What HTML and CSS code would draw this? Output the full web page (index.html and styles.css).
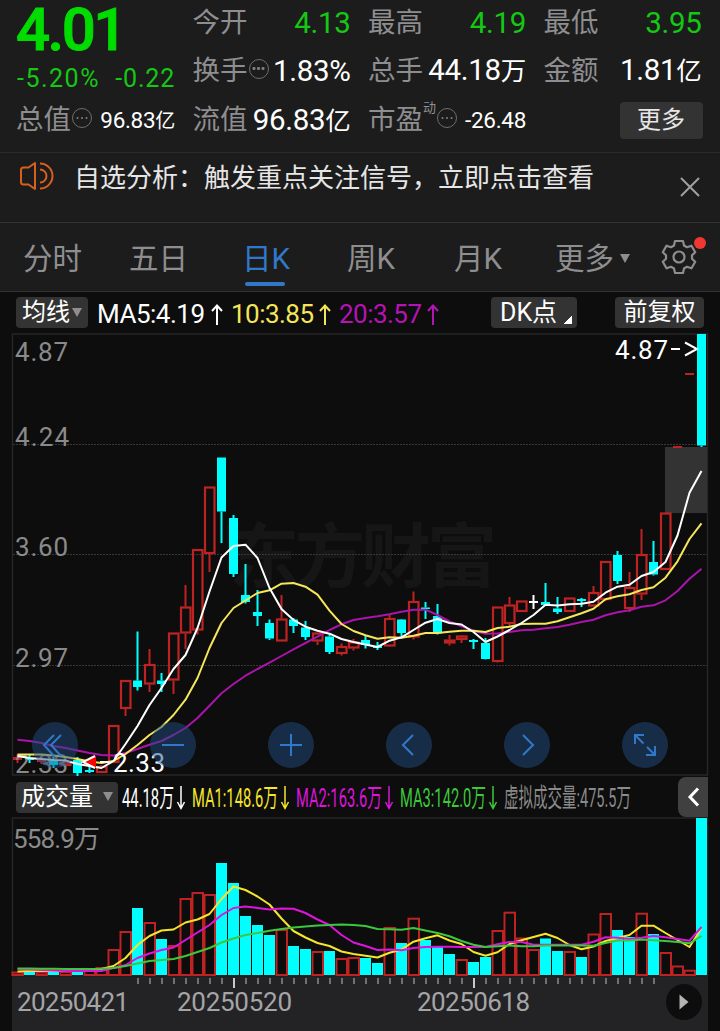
FILE: index.html
```
<!DOCTYPE html>
<html lang="zh-CN">
<head>
    <meta charset="UTF-8">
    <meta name="viewport" content="width=device-width, initial-scale=1.0">
    <title>日K</title>
    <link rel="stylesheet" href="styles.css">
</head>
<body>
    <section class="quote">
        <div class="price-box">
            <div class="price">4.01</div>
            <div class="change"><span class="percent">-5.20%</span><span>-0.22</span></div>
        </div>
        <div class="item"><label>今开</label><b class="green">4.13</b></div>
        <div class="item"><label>最高</label><b class="green">4.19</b></div>
        <div class="item"><label>最低</label><b class="green">3.95</b></div>
        <div class="item"><label>换手</label><i class="dots"></i><b>1.83%</b></div>
        <div class="item"><label>总手</label><b>44.18<em>万</em></b></div>
        <div class="item"><label>金额</label><b>1.81<em>亿</em></b></div>
        <div class="item"><label>总值</label><i class="dots"></i><b class="small">96.83<em>亿</em></b></div>
        <div class="item"><label>流值</label><b>96.83<em>亿</em></b></div>
        <div class="item"><label>市盈</label><sup>动</sup><i class="dots"></i><b class="small">-26.48</b></div>
        <div class="item"><button class="more">更多</button></div>
    </section>

    <section class="notice">
        <svg class="horn" width="36" height="30" viewBox="0 0 36 30" fill="none" stroke="#d95f1e" stroke-width="2">
            <path d="M17 2 L10.500 6.500 H5.500 Q3 6.500 3 9 V21 Q3 23.500 5.500 23.500 H10.500 L17 28 Z" stroke-linejoin="round"/>
            <path d="M22 8.500 A6.500 6.500 0 0 1 22 21.500"/>
            <path d="M22 2.500 A12.500 12.500 0 0 1 22 27.500"/>
        </svg>
        <span class="notice-text">自选分析：触发重点关注信号，立即点击查看</span>
        <svg class="close" width="20" height="20" viewBox="0 0 20 20" stroke="#a0a0a0" stroke-width="2"><path d="M1 1 L19 19 M19 1 L1 19"/></svg>
    </section>

    <nav class="tabs">
        <span>分时</span>
        <span>五日</span>
        <span class="active">日K</span>
        <span>周K</span>
        <span>月K</span>
        <span>更多<i class="arrow"></i></span>
        <span class="gear">
            <svg width="36" height="36" viewBox="-18 -18 36 36" fill="none" stroke="#8e8e90" stroke-width="2.200" stroke-linejoin="round">
                <path d="M-4 -16 H4 L5 -11.500 L8 -9.800 L12.500 -11.300 L16.200 -4.800 L13 -1.700 V1.700 L16.200 4.800 L12.500 11.300 L8 9.800 L5 11.500 L4 16 H-4 L-5 11.500 L-8 9.800 L-12.500 11.300 L-16.200 4.800 L-13 1.700 V-1.700 L-16.200 -4.800 L-12.500 -11.300 L-8 -9.800 L-5 -11.500 Z"/>
                <circle r="5.500"/>
            </svg>
            <i class="red-dot"></i>
        </span>
    </nav>

    <section class="legend">
        <button class="btn ma-btn">均线<i class="arrow"></i></button>
        <svg class="legend-text" width="360" height="40" viewBox="88 292 360 40">
            <text x="97" y="322" textLength="108" fill="#fff">MA5:4.19</text>
            <text x="231" y="322" textLength="83" fill="#f5e55a">10:3.85</text>
            <text x="339" y="322" textLength="83" fill="#b414b4">20:3.57</text>
            <g fill="none" stroke-width="2">
                <path d="M217 324 V305 M212 310 L217 304.500 L222 310" stroke="#fff"/>
                <path d="M325 324 V305 M320 310 L325 304.500 L330 310" stroke="#f5e55a"/>
                <path d="M433 324 V305 M428 310 L433 304.500 L438 310" stroke="#b414b4"/>
            </g>
        </svg>
        <button class="btn dk-btn">DK点<i class="corner"></i></button>
        <button class="btn fq-btn">前复权</button>
    </section>

    <section class="chart">
        <svg id="kline" width="720" height="444" viewBox="0 333 720 444">
            <text class="watermark" x="229" y="582" textLength="268">东方财富</text>
            <path class="frame" d="M12.500 334 H707.500 V775 H12.500 Z"/>
            <path class="grid" d="M13 444.500 H707 M13 554.500 H707 M13 665.500 H707"/>
            <rect x="665" y="447" width="42" height="66" fill="#333"/>
        </svg>
        <div class="controls">
            <button><svg viewBox="0 0 46 46"><path d="M22 13 L12 23 L22 34 M29 13 L19 23 L29 34"/></svg></button>
            <button><svg viewBox="0 0 46 46"><path d="M12 23 H34"/></svg></button>
            <button><svg viewBox="0 0 46 46"><path d="M12 23 H34 M23 12 V34"/></svg></button>
            <button><svg viewBox="0 0 46 46"><path d="M27 13 L17 23 L27 33"/></svg></button>
            <button><svg viewBox="0 0 46 46"><path d="M19 13 L29 23 L19 33"/></svg></button>
            <button><svg viewBox="0 0 46 46"><path d="M13 22 V13 H22 M13 13 L21.500 21.500 M33 24 V33 H24 M33 33 L25 25"/></svg></button>
        </div>
    </section>

    <section class="legend vol-legend">
        <button class="btn vol-btn">成交量<i class="arrow"></i></button>
        <svg class="vol-text" width="520" height="40" viewBox="118 777 520 40">
            <g>
                <text x="122" y="807" textLength="52" lengthAdjust="spacingAndGlyphs" fill="#fff">44.18万</text>
                <text x="192" y="807" textLength="86" lengthAdjust="spacingAndGlyphs" fill="#f5e62c">MA1:148.6万</text>
                <text x="296" y="807" textLength="86" lengthAdjust="spacingAndGlyphs" fill="#dc14dc">MA2:163.6万</text>
                <text x="400" y="807" textLength="86" lengthAdjust="spacingAndGlyphs" fill="#3cc83c">MA3:142.0万</text>
                <text x="504" y="807" textLength="127" lengthAdjust="spacingAndGlyphs" fill="#8a8a8a">虚拟成交量:475.5万</text>
            </g>
            <g fill="none" stroke-width="1.500">
                <path d="M181 786 V808 M177.500 802 L181 808.500 L184.500 802" stroke="#fff"/>
                <path d="M285 786 V808 M281.500 802 L285 808.500 L288.500 802" stroke="#f5e62c"/>
                <path d="M389 786 V808 M385.500 802 L389 808.500 L392.500 802" stroke="#dc14dc"/>
                <path d="M493 786 V808 M489.500 802 L493 808.500 L496.500 802" stroke="#3cc83c"/>
            </g>
        </svg>
        <button class="fold"><svg width="30" height="40" viewBox="0 0 30 40"><path d="M20 11.500 L12 20 L20 28.500"/></svg></button>
    </section>

    <section class="chart">
        <svg id="volume" width="720" height="160" viewBox="0 817 720 160">
            <path class="frame" d="M12.500 818 H707.500 V976 H12.500 Z"/>
        </svg>
    </section>

    <footer class="axis">
        <svg id="dates" width="696" height="54" viewBox="12 977 696 54">
            <text x="17" y="1011" textLength="112">20250421</text>
            <text x="177" y="1011" textLength="115">20250520</text>
            <text x="417" y="1011" textLength="113">20250618</text>
            <circle cx="684" cy="1002" r="18" fill="#0d0d0d"/>
            <path d="M679.500 994.500 L688.500 1002 L679.500 1009.500 Z" fill="#b4b4b4"/>
        </svg>
    </footer>

    <script src="chart.js"></script>
</body>
</html>
```
FILE: styles.css
```
* {
    box-sizing: border-box;
}
body {
    margin: 0;
    width: 720px;
    height: 1031px;
    overflow: hidden;
    background: #0d0d0d;
    color: #fff;
    font-family: Roboto, "Noto Sans CJK SC", sans-serif;
}
button {
    border: none;
    padding: 0;
    color: #fff;
    font-family: inherit;
}
svg {
    display: block;
}
svg text {
    font-family: Roboto, "Noto Sans CJK SC", sans-serif;
}
i, em {
    font-style: normal;
}

/* quote header */
.quote {
    display: grid;
    grid-template-columns: 159px 158px 158px 158px;
    grid-template-rows: 45px 51px 48px;
    column-gap: 17.500px;
    height: 153px;
    padding: 0 16px;
    background: #1c1c1c;
    border-bottom: 1px solid #2b2b2b;
}
.price-box {
    grid-row: span 2;
}
.price {
    height: 61px;
    font-size: 60px;
    line-height: 60px;
    font-weight: 500;
    letter-spacing: -2.500px;
    -webkit-text-stroke: 1px #00dc00;
    color: #00dc00;
}
.change {
    display: flex;
    justify-content: space-between;
    padding-left: 1px;
    font-size: 25px;
    line-height: 35px;
    letter-spacing: 0.800px;
    color: #14c814;
}
.change .percent {
    letter-spacing: 1.500px;
}
.item {
    display: flex;
    align-items: center;
    white-space: nowrap;
}
.item label {
    font-size: 27.500px;
    line-height: 40px;
    color: #8e8e90;
}
.item b {
    margin-left: auto;
    font-size: 29.500px;
    line-height: 40px;
    font-weight: 400;
    letter-spacing: -0.300px;
}
.item em {
    font-size: 25.500px;
}
.item b.green {
    color: #14c814;
}
.item b.small {
    font-size: 22.500px;
}
.item .small em {
    font-size: 20px;
}
.item sup {
    align-self: flex-start;
    font-size: 13px;
    line-height: 24px;
    color: #8e8e90;
}
.dots {
    display: flex;
    align-items: center;
    justify-content: center;
    width: 20px;
    height: 20px;
    margin: -4px 0 0 1px;
    border: 1.500px solid #6e6e70;
    border-radius: 50%;
}
.dots::before {
    content: "";
    width: 2.500px;
    height: 2.500px;
    border-radius: 50%;
    background: #808082;
    box-shadow: -4.500px 0 #808082, 4.500px 0 #808082;
}
.more {
    width: 83px;
    height: 37px;
    margin-left: auto;
    margin-right: -1px;
    border-radius: 4px;
    background: #333;
    font-size: 24px;
    line-height: 35px;
    color: #e6e6e6;
}

/* notice bar */
.notice {
    display: flex;
    height: 70px;
    padding: 0 20px 0 18px;
    background: #1c1c1c;
    border-bottom: 1px solid #333;
}
.horn {
    margin-top: 8px;
}
.notice-text {
    margin-left: 20px;
    font-size: 26px;
    line-height: 51px;
    color: #e6e6e6;
}
.close {
    margin: 24px 0 0 auto;
}

/* period tabs */
.tabs {
    display: grid;
    grid-template-columns: 106px 113px 105px 107px 101px 106px 36px;
    height: 69px;
    padding-left: 23px;
    background: #1c1c1c;
    border-bottom: 1px solid #333;
    font-size: 29.500px;
    line-height: 73px;
    color: #8e8e90;
    white-space: nowrap;
}
.tabs span {
    position: relative;
}
.tabs .active {
    color: #3278c8;
}
.tabs .active::after {
    content: "";
    position: absolute;
    left: 3px;
    top: 59px;
    width: 40px;
    height: 4px;
    border-radius: 2px;
    background: #3278c8;
}
.arrow {
    display: inline-block;
    border: 5px solid transparent;
    border-top: 9px solid #8e8e90;
    border-bottom: none;
}
.tabs .arrow {
    margin: 0 0 6px 6px;
}
.gear svg {
    margin-top: 16px;
}
.red-dot {
    position: absolute;
    right: -9px;
    top: 14px;
    width: 12px;
    height: 12px;
    border-radius: 50%;
    background: #f03732;
}

/* indicator rows */
.legend {
    display: flex;
    align-items: center;
    height: 41px;
    padding: 0 16px;
    font-size: 26px;
}
.btn {
    height: 31px;
    border-radius: 4px;
    background: #333;
    font-size: 24px;
    line-height: 31px;
    white-space: nowrap;
}
.ma-btn {
    width: 72px;
}
.ma-btn .arrow {
    margin: 0 0 3px 2px;
}
.dk-btn {
    display: flex;
    width: 86px;
    margin-left: 43px;
    padding-left: 9px;
    font-size: 25px;
}
.corner {
    margin: 19px 0 0 7px;
    width: 8px;
    height: 8px;
    background: linear-gradient(135deg, transparent 50%, #fff 50%);
}
.fq-btn {
    width: 89px;
    margin-left: auto;
}
.vol-legend {
    height: 40px;
    padding: 0 12px 0 16px;
}
.vol-btn {
    width: 102px;
}
.vol-btn .arrow {
    margin: 0 0 4px 10px;
}
.fold {
    width: 30px;
    height: 40px;
    margin-left: auto;
    border-radius: 8px 0 0 8px;
    background: #404040;
}
.fold path {
    fill: none;
    stroke: #fff;
    stroke-width: 3;
}

/* charts */
.chart {
    position: relative;
}
.frame {
    fill: none;
    stroke: #262626;
    stroke-width: 1.500;
}
.grid {
    stroke: #383838;
    stroke-dasharray: 2 1;
}
.watermark {
    font-size: 70px;
    font-weight: 700;
    fill: #161616;
}
.line {
    fill: none;
    stroke-width: 2;
    stroke-linejoin: round;
}
.label {
    font-size: 26px;
    fill: #8a8a8a;
}
.label.white {
    fill: #fff;
}
.controls {
    position: absolute;
    left: 32px;
    top: 389px;
    display: flex;
    gap: 72px;
}
.controls button {
    width: 46px;
    height: 46px;
    border-radius: 50%;
    background: rgba(33, 78, 130, 0.500);
}
.controls path {
    fill: none;
    stroke: #3278c8;
    stroke-width: 2;
}
.axis {
    width: 696px;
    margin-left: 12px;
    background: #232326;
    font-size: 26px;
}
.axis text {
    fill: #a5a5a7;
}
```
FILE: chart.js
```
const NS = "http://www.w3.org/2000/svg";
const STEP = 12;
const START = 17.5;
const RED = "#be2323";
const CYAN = "#00ffff";

// type, high, body top, body bottom, low
const candles = [
    ["r",754,757,760,763],["c",755,758,760,763],["r",757,759,762,764],["c",757,760,765,768],["r",758,762,766,767],
    ["c",757,760,773,776],["c",764,770,772,773],["r",765,766,773,773],["r",725,725,763,763],["r",680,680,709,716],
    ["c",631.5,680.5,687,690.5],["r",649,664,684.5,692],["c",673,680.5,684,692],["r",632.5,632.5,680.5,694],["r",585,606.5,633.5,649],
    ["r",549,549,630.5,634.5],["r",486.5,486.5,554,572],["c",457.5,457.5,511.5,543],["c",515,518,574,577],["c",564,595,602,603.5],
    ["c",590,612,616,626],["c",619.5,623,638.5,640],["r",595,618.5,641.5,641.5],["c",618,619.5,626,633],["c",621,627.5,637,640],
    ["r",632.5,632.5,641.5,645],["c",634.5,636.5,652,654],["r",643.5,646,654,655.5],["r",639,641.5,648.5,650.5],["c",636,640,645,648.5],
    ["c",642,646,648,650],["r",614.5,618,646.5,647],["c",619,619.5,633,636],["r",591.5,601,637.5,639.5],["c",602,607.5,609,619],
    ["c",604,616,633.5,634.5],["r",635,639.5,643.5,645.5],["r",635,635.5,640,643],["c",639,640,642,649],["c",638,643,659,659.5],
    ["r",606.5,606.5,662,662.5],["r",597,604.5,624,626],["r",600.5,600.5,612,612],["w",595,601,603,609],["c",583,602,605,605],
    ["c",597,608.5,612,614],["r",597.5,597.5,612,612],["c",598,599,601,607],["r",586,592,606.5,606.5],["r",561,561,600,601],
    ["c",551,555,581,584],["r",572,587,609,612],["r",529,554,594.5,600],["c",541,562,574.5,575.5],["r",512.5,512.5,570,570],
    ["r",446,446,448,448],["r",373,373,375,375],["c",334,334,445.5,447]
];

const ma5 = [756,758,759,760,760.5,764,766,768,761,744,726,705,688,669,655,628,591.5,557.5,546,544.7,558,588,609,620,626.7,630.7,633.7,639,642,644.5,647,640.7,637.3,630,622.7,619,623,624.5,632,642,636.5,630,623,615,604.7,605.5,604.3,603.7,601.7,592.7,586.7,584.7,576,572,562,535.5,492.7,471];
const ma10 = [754.5,754.5,754.5,755.5,757,759,761.5,763,761,754,745,735,727,715,699.7,678,648,623,608,600.5,593,590.3,583.7,583,586.7,594.7,610.7,624,631,635.3,638.7,637.3,637.7,635.7,633,633,631.7,630.7,630.7,632,628,626.7,624,623.7,623.7,621.3,617.3,613.3,608.7,599.3,596.3,594.3,590,587.3,577.7,561.3,539,523.3];
const ma20 = [739.7,741,743,746,748,750.5,753,755,755.5,753,749,744.7,741,735,728,718,705.7,693.3,684,675.7,669,662.7,656,649.3,643,636.7,630,624.3,620,618,616.3,614.3,611.7,609.7,609.7,615,621.3,626.3,630.7,633.7,633.5,632,630.3,629.7,628.3,627,624.7,622,619.7,615.3,612.3,610.3,606.7,605.3,600.3,591,578.7,568.7];

// tops of the volume bars, colour follows volType
const volType = "rcrcrcrrrr" + "crcrrrrccc" + "ccrccrcrrc" + "crcrcccrcc" + "rrrrccrcrr" + "ccrcrrrc";
const vols = [971.5,971,971.5,970.5,971,971,970,967,949,931,908,922,939,945,898,892,894,863,883,916,925,935,929,946,949,951,951,958,957,958,963,927,943,917.7,940,947,954,959,962,957,930,911.7,937.5,949,938.5,951,951,957,933.5,913,930,937,912.7,934,952,965.5,969.7,818];
const vol1 = [971.5,971,971,971,971,971,970.5,969,966,958,945,936,930.5,929.5,922.5,919.5,914,899,886.5,890,896.5,904.5,918.5,931,937.5,943,946,951.5,954,955.7,957.5,952.7,949.5,941.7,938.3,935.3,940.5,944,952,955.7,952.3,944,940.3,937,933.7,938,945,949.3,946.5,941,938,935,925.7,925.7,933,940,947,928];
const vol2 = [969,969.5,970,970.5,971,971,971,971,968,965,958,953.5,950,947.5,940,932.5,925,915,908,906.5,908,909.5,908.5,908.7,913,919.5,925,935,942.5,946,950,949.5,950.3,948,947,946.7,946.7,947,947,947,944.3,942,942,944.7,944.7,944.7,944.7,944.7,941.7,937.3,937.7,939,937.7,936,937.3,939,940.7,927];
const vol3 = [968.5,968.5,968.7,968.7,969,969,969,968.7,968,966,963.5,961,960,959,956,952,948,942.5,938.5,935,933,930.7,929,927.5,926.5,925.5,925,924.5,925,926,929,929.3,929.7,928,930.5,933,936.3,941,944.7,947,946.3,945.5,946.3,946.3,945.5,945.5,945.5,945.5,945.7,943,940.5,940.5,939.5,940.3,941,942,943.3,936];

const kline = document.getElementById("kline");
const volume = document.getElementById("volume");
const dates = document.getElementById("dates");

function add(parent, tag, attrs, text) {
    const el = document.createElementNS(NS, tag);
    for (const key in attrs) el.setAttribute(key, attrs[key]);
    if (text) el.textContent = text;
    parent.appendChild(el);
    return el;
}

function line(parent, data, color) {
    const points = data.map((y, i) => (START + i * STEP) + "," + y).join(" ");
    add(parent, "polyline", { points: points, class: "line", stroke: color });
}

function label(parent, x, y, text, width, cls) {
    add(parent, "text", { x: x, y: y, textLength: width, class: "label " + (cls || "") }, text);
}

candles.forEach(([type, high, top, bottom, low], i) => {
    const x = START + i * STEP;
    const color = type === "r" ? RED : type === "c" ? CYAN : "#fff";
    if (high < top) add(kline, "path", { d: `M${x} ${high}V${top}`, stroke: color, "stroke-width": 2 });
    if (low > bottom) add(kline, "path", { d: `M${x} ${bottom}V${low}`, stroke: color, "stroke-width": 2 });
    if (type === "r" && bottom - top > 3) {
        add(kline, "rect", { x: x - 4.5, y: top + 1, width: 9.5, height: bottom - top - 2, fill: "none", stroke: color, "stroke-width": 2.2 });
    } else {
        add(kline, "rect", { x: x - 4.5, y: top, width: 9, height: bottom - top, fill: color });
    }
});
label(kline, 15, 361, "4.87", 53);
label(kline, 15, 446, "4.24", 54);
label(kline, 15, 556, "3.60", 53);
label(kline, 15, 667, "2.97", 53);
label(kline, 15, 773, "2.33", 53);
line(kline, ma20, "#aa14aa");
line(kline, ma10, "#f5e65a");
line(kline, ma5, "#fff");
add(kline, "path", { d: "M83 762 L96 756 V768 Z", fill: "#ff0000" });
add(kline, "path", { d: "M95 756 L83 762 L95 768 M100 762 H109", fill: "none", stroke: "#fff", "stroke-width": 2 });
label(kline, 113, 772, "2.33", 52, "white");
label(kline, 615, 359, "4.87", 53, "white");
add(kline, "path", { d: "M671 349 H680 M685 342.500 L697 349 L685 355.500", fill: "none", stroke: "#fff", "stroke-width": 2 });

vols.forEach((y, i) => {
    const x = START + i * STEP;
    if (volType[i] === "c") {
        add(volume, "rect", { x: x - 5.5, y: y, width: 11, height: 975 - y, fill: CYAN });
    } else {
        add(volume, "rect", { x: x - 5, y: y + 1, width: 10.5, height: Math.max(974 - y, 2), fill: "none", stroke: RED, "stroke-width": 2 });
    }
});
label(volume, 13, 848, "558.9万", 87);
line(volume, vol1, "#f5e62c");
line(volume, vol2, "#dc14dc");
line(volume, vol3, "#3cc83c");

for (let x = 138; x < 660; x += STEP) {
    const major = x === 234 || x === 474;
    add(dates, "path", { d: `M${x} 978V${major ? 988 : 984}`, stroke: major ? "#c8c8c8" : "#707072", "stroke-width": 2 });
}
```
